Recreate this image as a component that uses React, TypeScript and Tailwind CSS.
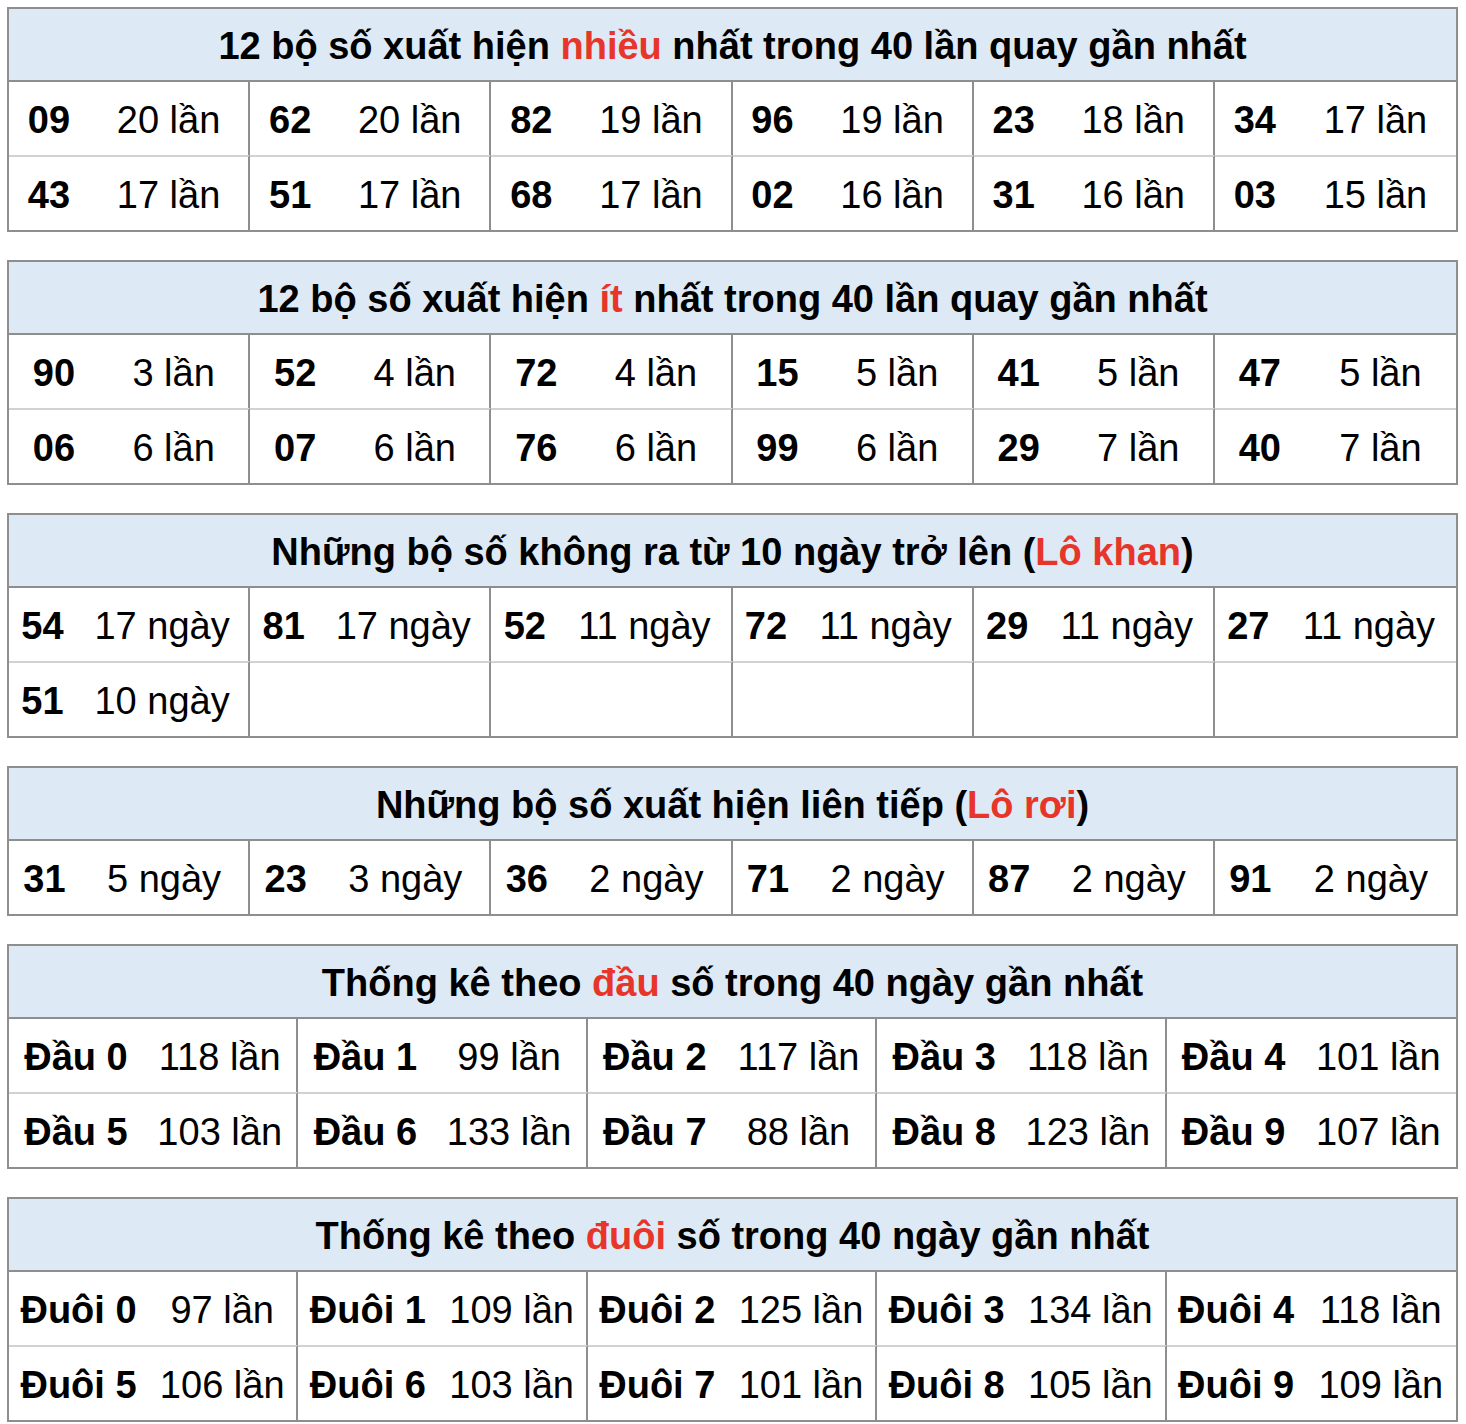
import React from "react";

type Item = [string, string] | null;

interface StatTableProps {
  title: React.ReactNode;
  cols: 5 | 6;
  // width of the number sub-column inside each cell
  numCol: string;
  rows: Item[][];
}

const StatTable: React.FC<StatTableProps> = ({ title, cols, numCol, rows }) => {
  const gridCols = cols === 6 ? "grid-cols-6" : "grid-cols-5";
  return (
    <div className="border-2 border-[#8e8e8e] bg-white">
      <div className="h-[73px] pt-[3px] flex items-center justify-center bg-[#ddeaf6] border-b-2 border-[#8e8e8e] font-bold text-[38px] text-black">
        {title}
      </div>
      {rows.map((row, ri) => (
        <div key={ri} className={`grid ${gridCols}`}>
          {row.map((item, ci) => (
            <div
              key={ci}
              className={`grid ${numCol} items-center pt-[3px] text-[38px] text-black ${
                ri > 0 ? "h-[75px] border-t-2 border-t-[#d2d2d2]" : "h-[73px]"
              } ${ci < cols - 1 ? "border-r-2 border-r-[#8e8e8e]" : ""}`}
            >
              {item && (
                <>
                  <span className="text-center font-bold">{item[0]}</span>
                  <span className="text-center">{item[1]}</span>
                </>
              )}
            </div>
          ))}
        </div>
      ))}
    </div>
  );
};

const Red: React.FC<{ children: React.ReactNode }> = ({ children }) => (
  <span className="text-[#e8352a]">{children}</span>
);

const lan = (n: number) => `${n} lần`;
const ngay = (n: number) => `${n} ngày`;

export default function App() {
  return (
    <div
      className="w-[1466px] min-h-[1424px] bg-white pt-[7px] pl-[7px] pr-[8px] flex flex-col gap-[28px]"
      style={{ fontFamily: '"Liberation Sans", Arial, sans-serif' }}
    >
      <StatTable
        cols={6}
        numCol="grid-cols-[80px_1fr]"
        title={<span>12 bộ số xuất hiện <Red>nhiều</Red> nhất trong 40 lần quay gần nhất</span>}
        rows={[
          [["09", lan(20)], ["62", lan(20)], ["82", lan(19)], ["96", lan(19)], ["23", lan(18)], ["34", lan(17)]],
          [["43", lan(17)], ["51", lan(17)], ["68", lan(17)], ["02", lan(16)], ["31", lan(16)], ["03", lan(15)]],
        ]}
      />
      <StatTable
        cols={6}
        numCol="grid-cols-[90px_1fr]"
        title={<span>12 bộ số xuất hiện <Red>ít</Red> nhất trong 40 lần quay gần nhất</span>}
        rows={[
          [["90", lan(3)], ["52", lan(4)], ["72", lan(4)], ["15", lan(5)], ["41", lan(5)], ["47", lan(5)]],
          [["06", lan(6)], ["07", lan(6)], ["76", lan(6)], ["99", lan(6)], ["29", lan(7)], ["40", lan(7)]],
        ]}
      />
      <StatTable
        cols={6}
        numCol="grid-cols-[67px_1fr]"
        title={<span>Những bộ số không ra từ 10 ngày trở lên (<Red>Lô khan</Red>)</span>}
        rows={[
          [["54", ngay(17)], ["81", ngay(17)], ["52", ngay(11)], ["72", ngay(11)], ["29", ngay(11)], ["27", ngay(11)]],
          [["51", ngay(10)], null, null, null, null, null],
        ]}
      />
      <StatTable
        cols={6}
        numCol="grid-cols-[71px_1fr]"
        title={<span>Những bộ số xuất hiện liên tiếp (<Red>Lô rơi</Red>)</span>}
        rows={[
          [["31", ngay(5)], ["23", ngay(3)], ["36", ngay(2)], ["71", ngay(2)], ["87", ngay(2)], ["91", ngay(2)]],
        ]}
      />
      <StatTable
        cols={5}
        numCol="grid-cols-[134px_1fr]"
        title={<span>Thống kê theo <Red>đầu</Red> số trong 40 ngày gần nhất</span>}
        rows={[
          [["Đầu 0", lan(118)], ["Đầu 1", lan(99)], ["Đầu 2", lan(117)], ["Đầu 3", lan(118)], ["Đầu 4", lan(101)]],
          [["Đầu 5", lan(103)], ["Đầu 6", lan(133)], ["Đầu 7", lan(88)], ["Đầu 8", lan(123)], ["Đầu 9", lan(107)]],
        ]}
      />
      <StatTable
        cols={5}
        numCol="grid-cols-[139px_1fr]"
        title={<span>Thống kê theo <Red>đuôi</Red> số trong 40 ngày gần nhất</span>}
        rows={[
          [["Đuôi 0", lan(97)], ["Đuôi 1", lan(109)], ["Đuôi 2", lan(125)], ["Đuôi 3", lan(134)], ["Đuôi 4", lan(118)]],
          [["Đuôi 5", lan(106)], ["Đuôi 6", lan(103)], ["Đuôi 7", lan(101)], ["Đuôi 8", lan(105)], ["Đuôi 9", lan(109)]],
        ]}
      />
    </div>
  );
}
